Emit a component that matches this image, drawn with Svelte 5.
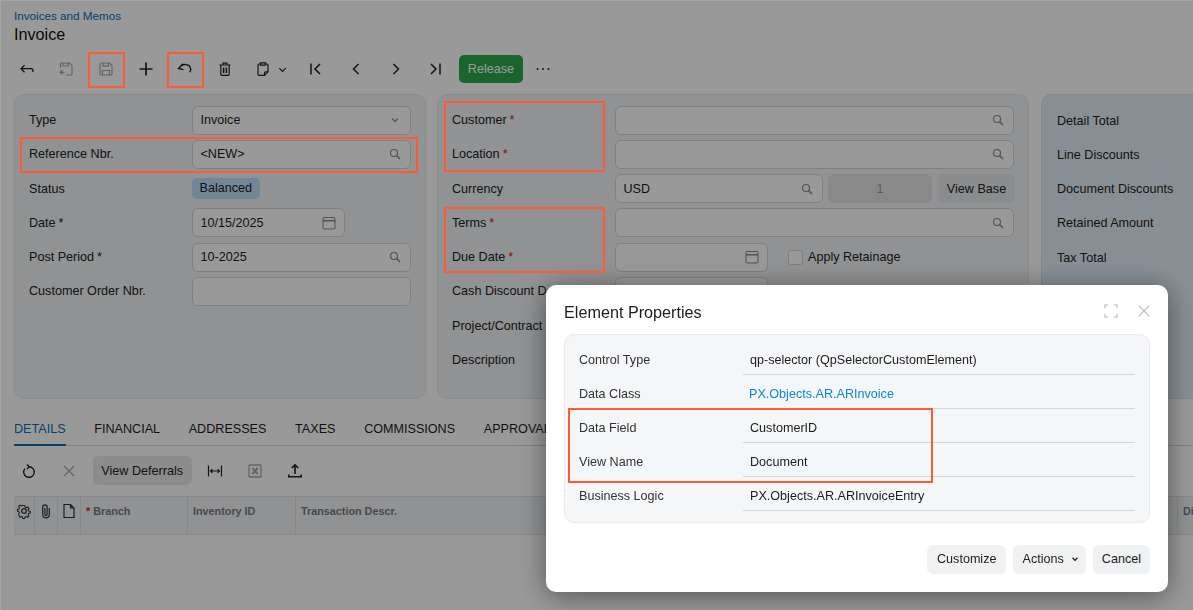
<script>
  const leftRows = [
    { label: 'Type', value: 'Invoice', icon: 'chevron' },
    { label: 'Reference Nbr.', value: '<NEW>', icon: 'search' },
    { label: 'Status', badge: 'Balanced' },
    { label: 'Date', star: 'plain', value: '10/15/2025', icon: 'calendar', narrow: true },
    { label: 'Post Period', star: 'plain', value: '10-2025', icon: 'search' },
    { label: 'Customer Order Nbr.', value: '' }
  ];

  const totals = ['Detail Total', 'Line Discounts', 'Document Discounts', 'Retained Amount', 'Tax Total'];
  const tabs = ['Details', 'Financial', 'Addresses', 'Taxes', 'Commissions', 'Approvals'];

  const props = [
    { label: 'Control Type', value: 'qp-selector (QpSelectorCustomElement)' },
    { label: 'Data Class', value: 'PX.Objects.AR.ARInvoice', link: true },
    { label: 'Data Field', value: 'CustomerID' },
    { label: 'View Name', value: 'Document' },
    { label: 'Business Logic', value: 'PX.Objects.AR.ARInvoiceEntry' }
  ];
</script>

{#snippet icon(name)}
  {#if name === 'search'}
    <svg class="field-icon" viewBox="0 0 12 12" fill="none" stroke="currentColor" stroke-width="1.2">
      <circle cx="5" cy="5" r="3.5"></circle>
      <path d="M7.6 7.6 11 11" stroke-width="1.5"></path>
    </svg>
  {:else if name === 'chevron'}
    <svg class="field-icon" viewBox="0 0 12 12" fill="none" stroke="currentColor" stroke-width="1.2">
      <path d="M3 4.5 6 7.5 9 4.5"></path>
    </svg>
  {:else if name === 'calendar'}
    <svg class="cal-icon" viewBox="0 0 14 14" fill="none" stroke="currentColor" stroke-width="1.1">
      <rect x="1" y="1.5" width="12" height="11.5" rx="1.5"></rect>
      <path d="M1 4.8h12" stroke-width="1.5"></path>
    </svg>
  {/if}
{/snippet}

{#snippet field(value, name, cls = '')}
  <div class="input {cls}">
    <span class="input-text">{value}</span>
    {@render icon(name)}
  </div>
{/snippet}

<div class="page">
  <header class="head">
    <a class="crumb" href="#top">Invoices and Memos</a>
    <h1>Invoice</h1>
  </header>

  <div class="toolbar">
    <button class="tool" aria-label="Back">
      <svg viewBox="0 0 18 18" fill="none" stroke="currentColor" stroke-width="1.3"><path d="M6.5 5.2 3 8.7l3.5 3.5M3 8.7h10.2a1.8 1.8 0 0 1 1.8 1.8v1.4"></path></svg>
    </button>
    <button class="tool off" aria-label="Save and close">
      <svg viewBox="0 0 18 18" fill="none" stroke="currentColor" stroke-width="1.2"><path d="M3.5 8V4a1 1 0 0 1 1-1h8l2.5 2.5V14a1 1 0 0 1-1 1H9M6 3v3h5V3"></path><path d="M5.5 10 3 12.3l2.5 2.3M3 12.3h4.5"></path></svg>
    </button>
    <button class="tool off" aria-label="Save">
      <svg viewBox="0 0 18 18" fill="none" stroke="currentColor" stroke-width="1.2"><path d="M3 4a1 1 0 0 1 1-1h8.5L15 5.5V14a1 1 0 0 1-1 1H4a1 1 0 0 1-1-1z"></path><path d="M6 3v3.2h5.5V3M5.5 15v-4.5h7V15"></path></svg>
    </button>
    <button class="tool" aria-label="Add">
      <svg viewBox="0 0 18 18" fill="none" stroke="currentColor" stroke-width="1.7"><path d="M9 2.5v13M2.5 9h13"></path></svg>
    </button>
    <button class="tool" aria-label="Undo">
      <svg viewBox="0 0 18 18" fill="none" stroke="currentColor" stroke-width="1.4"><path d="M6.8 3.8 2.6 8.5l4.8 1.1M3 8.3C4.8 5.4 7.6 4.2 10.2 4.6a4.7 4.7 0 0 1 3.5 7.6"></path></svg>
    </button>
    <button class="tool" aria-label="Delete">
      <svg viewBox="0 0 18 18" fill="none" stroke="currentColor" stroke-width="1.2"><path d="M3.5 5h11M7 5V3.2h4V5M4.8 5v9.3a1 1 0 0 0 1 1h6.4a1 1 0 0 0 1-1V5"></path><path d="M7.6 7.5v5.5M10.4 7.5v5.5" stroke-width="1.5"></path></svg>
    </button>
    <button class="tool paste" aria-label="Copy">
      <svg viewBox="0 0 18 18" fill="none" stroke="currentColor" stroke-width="1.2"><path d="M6.5 4H5a1 1 0 0 0-1 1v9.3a1 1 0 0 0 1 1h5.5l3.5-3.5V5a1 1 0 0 0-1-1h-1.5"></path><path d="M6.5 2.8h5V5.2h-5zM10.5 15.3v-2.5a1 1 0 0 1 1-1H14"></path></svg>
      <svg class="small" viewBox="0 0 12 12" fill="none" stroke="currentColor" stroke-width="1.4"><path d="M2.5 4.5 6 8l3.5-3.5"></path></svg>
    </button>
    <button class="tool" aria-label="First">
      <svg viewBox="0 0 18 18" fill="none" stroke="currentColor" stroke-width="1.5"><path d="M4 3.5v11M13 4 8 9l5 5"></path></svg>
    </button>
    <button class="tool" aria-label="Previous">
      <svg viewBox="0 0 18 18" fill="none" stroke="currentColor" stroke-width="1.5"><path d="M11.5 4 6.5 9l5 5"></path></svg>
    </button>
    <button class="tool" aria-label="Next">
      <svg viewBox="0 0 18 18" fill="none" stroke="currentColor" stroke-width="1.5"><path d="m6.5 4 5 5-5 5"></path></svg>
    </button>
    <button class="tool" aria-label="Last">
      <svg viewBox="0 0 18 18" fill="none" stroke="currentColor" stroke-width="1.5"><path d="m5 4 5 5-5 5M14 3.5v11"></path></svg>
    </button>
    <button class="release">Release</button>
    <button class="tool more" aria-label="More">
      <svg viewBox="0 0 18 18" fill="currentColor"><circle cx="3.5" cy="9" r="1"></circle><circle cx="9" cy="9" r="1"></circle><circle cx="14.5" cy="9" r="1"></circle></svg>
    </button>
  </div>

  <section class="panels">
    <div class="panel left">
      {#each leftRows as row}
        <div class="row">
          <span class="label">{row.label}{#if row.star}<i class="star plain">*</i>{/if}</span>
          {#if row.badge}
            <span class="badge">{row.badge}</span>
          {:else}
            {@render field(row.value, row.icon, row.narrow ? 'narrow' : '')}
          {/if}
        </div>
      {/each}
    </div>

    <div class="panel middle">
      <div class="row">
        <span class="label">Customer<i class="star">*</i></span>
        {@render field('', 'search')}
      </div>
      <div class="row">
        <span class="label">Location<i class="star">*</i></span>
        {@render field('', 'search')}
      </div>
      <div class="row">
        <span class="label">Currency</span>
        <div class="currency">
          {@render field('USD', 'search', 'usd')}
          <div class="rate">1</div>
          <button class="btn view-base">View Base</button>
        </div>
      </div>
      <div class="row">
        <span class="label">Terms<i class="star">*</i></span>
        {@render field('', 'search')}
      </div>
      <div class="row">
        <span class="label">Due Date<i class="star">*</i></span>
        <div class="due">
          {@render field('', 'calendar', 'narrow')}
          <label class="check"><span class="box"></span>Apply Retainage</label>
        </div>
      </div>
      <div class="row">
        <span class="label">Cash Discount Date</span>
        {@render field('', 'calendar', 'narrow')}
      </div>
      <div class="row"><span class="label">Project/Contract</span>{@render field('', 'search')}</div>
      <div class="row"><span class="label">Description</span>{@render field('', '')}</div>
    </div>

    <div class="panel totals">
      {#each totals as t}
        <div class="row"><span class="label">{t}</span></div>
      {/each}
    </div>
  </section>

  <nav class="tabs">
    {#each tabs as tab, i}
      <span class="tab" class:active={i === 0}>{tab}</span>
    {/each}
  </nav>

  <div class="grid-tools">
    <button class="tool" aria-label="Refresh">
      <svg viewBox="0 0 18 18" fill="none" stroke="currentColor" stroke-width="1.4"><path d="M8.8 4.7A5.3 5.3 0 1 1 4.9 6.6"></path><path d="M7 2.4 9.3 4.7 7 7"></path></svg>
    </button>
    <button class="tool off" aria-label="Remove">
      <svg viewBox="0 0 18 18" fill="none" stroke="currentColor" stroke-width="1.4"><path d="m4 4 10 10M14 4 4 14"></path></svg>
    </button>
    <button class="btn deferrals">View Deferrals</button>
    <button class="tool" aria-label="Fit columns">
      <svg viewBox="0 0 18 18" fill="none" stroke="currentColor" stroke-width="1.2"><path d="M2.5 3.5v11M15.5 3.5v11M4.5 9h9M6.3 7.2 4.5 9l1.8 1.8M11.7 7.2 13.5 9l-1.8 1.8"></path></svg>
    </button>
    <button class="tool off" aria-label="Export to Excel">
      <svg viewBox="0 0 18 18" fill="none" stroke="currentColor" stroke-width="1.3"><rect x="3" y="3" width="12" height="12" rx=".8"></rect><path d="m6.3 6 5.4 6M11.7 6l-5.4 6" stroke-width="2"></path></svg>
    </button>
    <button class="tool" aria-label="Upload">
      <svg viewBox="0 0 18 18" fill="none" stroke="currentColor" stroke-width="1.6"><path d="M9 12V3.2M5.8 6 9 2.8 12.2 6M2.8 12.5v2.3h12.4v-2.3"></path></svg>
    </button>
  </div>

  <div class="thead">
    <div class="th ico">
      <svg viewBox="0 0 16 16" fill="none" stroke="currentColor" stroke-width="1.3"><circle cx="8" cy="8" r="2.3"></circle><path d="M6.8 1.5h2.4l.4 2 1.5.7 1.8-1 1.6 1.8-1 1.6.5 1.6 2 .4v2.2l-2 .5-.6 1.5 1 1.7-1.7 1.6-1.7-1-1.5.6-.5 2H6.8l-.5-2-1.5-.6-1.7 1L1.4 12l1-1.7-.6-1.5-1.8-.5V6.1l2-.4.5-1.6-1-1.6 1.7-1.7 1.7 1 1.5-.7z" transform="translate(1.4 1.4) scale(.8)"></path></svg>
    </div>
    <div class="th ico">
      <svg viewBox="0 0 16 16" fill="none" stroke="currentColor" stroke-width="1.2"><path d="M11.3 5v6.5a3.3 3.3 0 0 1-6.6 0V4a2.2 2.2 0 0 1 4.4 0v7.5a1.1 1.1 0 0 1-2.2 0V5"></path></svg>
    </div>
    <div class="th ico">
      <svg viewBox="0 0 16 16" fill="none" stroke="currentColor" stroke-width="1.2"><path d="M3 1.5h6.5L13 5v9.5H3zM9.5 1.5V5H13"></path></svg>
    </div>
    <div class="th branch"><i class="star">*</i>Branch</div>
    <div class="th branch">Inventory ID</div>
    <div class="th descr">Transaction Descr.</div>
    <div class="th last">Di</div>
  </div>
</div>

<div class="overlay"></div>

<div class="modal">
  <div class="modal-head">
    <h2>Element Properties</h2>
    <div class="modal-actions">
      <svg class="expand" viewBox="0 0 14 14" fill="none" stroke="currentColor" stroke-width="1.1"><path d="M1 4V1h3M10 1h3v3M13 10v3h-3M4 13H1v-3"></path></svg>
      <svg class="close" viewBox="0 0 12 12" fill="none" stroke="currentColor" stroke-width="1.1"><path d="m.8.8 10.4 10.4M11.2.8.8 11.2"></path></svg>
    </div>
  </div>

  <div class="prop-card">
    {#each props as p}
      <div class="prop">
        <span class="prop-label">{p.label}</span>
        <span class="prop-value" class:link={p.link}>{p.value}</span>
      </div>
    {/each}
  </div>

  <div class="modal-foot">
    <button class="btn customize">Customize</button>
    <button class="btn actions">Actions
      <svg viewBox="0 0 12 12" fill="none" stroke="currentColor" stroke-width="1.5"><path d="M3 4.5 6 7.5 9 4.5"></path></svg>
    </button>
    <button class="btn">Cancel</button>
  </div>
</div>

<div class="mark save"></div>
<div class="mark undo"></div>
<div class="mark refnbr"></div>
<div class="mark customer"></div>
<div class="mark terms"></div>
<div class="mark datafield"></div>

<style>
  :global(body) {
    margin: 0;
    overflow: hidden;
    background: #fff;
  }

  .page {
    height: 610px;
    overflow: hidden;
    font-family: "Liberation Sans", Arial, sans-serif;
    font-size: 12.6px;
    color: #1d1d1d;
  }

  button {
    font: inherit;
    color: inherit;
    border: 0;
    background: none;
    padding: 0;
  }

  .head {
    padding: 9px 14px 0;
  }

  .crumb {
    display: block;
    font-size: 11.7px;
    line-height: 13px;
    color: #0a6fb5;
    text-decoration: none;
  }

  h1 {
    margin: 2px 0 0;
    font-size: 16.2px;
    line-height: 20px;
    font-weight: 400;
    color: #111;
  }

  .toolbar {
    display: flex;
    align-items: center;
    height: 36px;
    margin-top: 7px;
    padding-left: 7px;
  }

  .tool {
    display: flex;
    align-items: center;
    justify-content: center;
    width: 39.6px;
    height: 28px;
    color: #222;
    flex: none;
  }

  .tool svg {
    width: 18px;
    height: 18px;
  }

  .tool.off {
    color: #a9a9a9;
  }

  .tool.paste {
    width: 52px;
    gap: 5px;
    box-sizing: border-box;
  }

  .tool .small {
    width: 11px;
    height: 11px;
  }

  .release {
    height: 28px;
    width: 64px;
    margin-left: 4px;
    border-radius: 5px;
    background: #2ca84a;
    color: #fff;
  }

  .panels {
    display: grid;
    grid-template-columns: 412px 592px 1fr;
    gap: 11px;
    margin: 7px 0 0 14px;
    height: 305px;
  }

  .panel {
    box-sizing: border-box;
    padding: 7.9px 14px 0;
    border-radius: 10px;
    border: 1px solid #e6e9ee;
    background: #f1f3f6;
    overflow: hidden;
  }

  .panel.totals {
    margin-right: -20px;
    margin-left: 1px;
    background: #e2eef8;
    border-color: #d6e4ef;
    padding-left: 15px;
  }

  .row {
    display: flex;
    align-items: center;
    height: 34.25px;
  }

  .label {
    flex: none;
    width: 163px;
    white-space: nowrap;
    overflow: hidden;
    color: #222;
  }

  .totals .label {
    width: auto;
    margin-top: 1px;
  }

  .star {
    font-style: normal;
    color: #d4252a;
    margin-left: 3px;
  }

  .star.plain {
    color: #222;
  }

  .input {
    box-sizing: border-box;
    flex: 1;
    display: flex;
    align-items: center;
    justify-content: space-between;
    height: 29px;
    padding: 0 9px 0 7.5px;
    border: 1px solid #d3d6da;
    border-radius: 6px;
    background: #fff;
    min-width: 0;
  }

  .input.narrow {
    flex: none;
    width: 153px;
    padding-right: 8px;
  }

  .input-text {
    color: #1d1d1d;
  }

  .field-icon {
    width: 12px;
    height: 12px;
    color: #8c8c8c;
  }

  .cal-icon {
    width: 14px;
    height: 14px;
    color: #8c8c8c;
  }

  .badge {
    padding: 3px 7.5px 4px;
    border-radius: 5px;
    background: #bfe2fa;
    line-height: 14px;
  }

  .currency {
    flex: 1;
    display: flex;
    align-items: center;
  }

  .usd {
    flex: none;
    width: 208px;
  }

  .rate {
    flex: none;
    width: 104px;
    height: 29px;
    margin: 0 6px 0 5px;
    border-radius: 6px;
    background: #e4e5e7;
    color: #9a9a9a;
    display: flex;
    align-items: center;
    justify-content: center;
  }

  .btn {
    height: 29px;
    border-radius: 6px;
    background: #f0f1f2;
    color: #222;
    padding: 0 9px 1px;
    box-sizing: border-box;
    display: inline-flex;
    align-items: center;
    justify-content: center;
    flex: none;
  }

  .btn.customize {
    padding: 0 10px 1px;
  }

  .btn.actions {
    padding: 0 6px 1px 9px;
  }

  .view-base {
    width: 77px;
    padding: 0;
    background: #e8e9eb;
  }

  .due {
    flex: 1;
    display: flex;
    align-items: center;
  }

  .check {
    display: flex;
    align-items: center;
    gap: 5px;
    margin-left: 20px;
  }

  .box {
    box-sizing: border-box;
    width: 15px;
    height: 15px;
    border: 1px solid #cfd2d6;
    border-radius: 3px;
    background: #fff;
  }

  .tabs {
    display: flex;
    gap: 28.7px;
    margin: 16px 0 0 14px;
    height: 31px;
    box-sizing: border-box;
    border-bottom: 1px solid #d6d8db;
    white-space: nowrap;
  }

  .tab {
    text-transform: uppercase;
    line-height: 29px;
    height: 31px;
    box-sizing: border-box;
    color: #1d1d1d;
  }

  .tab.active {
    color: #0a6fb5;
    border-bottom: 2px solid #0a6fb5;
  }

  .grid-tools {
    display: flex;
    align-items: center;
    height: 29px;
    margin-top: 10px;
    padding-left: 9.5px;
  }

  .deferrals {
    width: 99px;
    padding: 0;
    margin-left: 4px;
    background: #e9eaec;
  }

  .grid-tools .deferrals + .tool {
    margin-left: 4px;
  }

  .thead {
    display: grid;
    grid-template-columns: 21px 23px 23px 107px 108px 882px 40px;
    height: 39px;
    margin: 11px 0 0 14px;
    box-sizing: border-box;
    border-top: 1px solid #dfe1e4;
    border-bottom: 1px solid #dfe1e4;
    background: #f1f3f6;
    color: #7b7b7b;
    font-size: 10.8px;
    font-weight: 700;
  }

  .th {
    box-sizing: border-box;
    padding: 7px 5px 0;
    border-right: 1px solid #dfe1e4;
    line-height: 14px;
    white-space: nowrap;
  }

  .th.ico {
    padding: 6px 0 0;
    display: flex;
    justify-content: center;
    color: #333;
  }

  .th.ico svg {
    width: 16px;
    height: 16px;
  }

  .th .star {
    font-weight: 700;
    margin: 0 3px 0 0;
  }

  .overlay {
    position: fixed;
    inset: 0;
    background: rgba(0, 0, 0, 0.4);
    box-shadow: inset 1px 1px 0 rgba(255, 255, 255, 0.12);
  }

  .modal {
    position: fixed;
    left: 546px;
    top: 285px;
    width: 622px;
    height: 307px;
    box-sizing: border-box;
    padding: 0 18px;
    display: flex;
    flex-direction: column;
    border-radius: 10px;
    background: #fff;
    box-shadow: 0 4px 28px rgba(0, 0, 0, 0.45);
    font-family: "Liberation Sans", Arial, sans-serif;
    font-size: 12.6px;
    color: #1d1d1d;
  }

  .modal-head {
    display: flex;
    align-items: center;
    justify-content: space-between;
    height: 49px;
  }

  h2 {
    margin: 6px 0 0;
    font-size: 16.2px;
    font-weight: 400;
    color: #1d1d1d;
  }

  .modal-actions {
    display: flex;
    align-items: center;
    gap: 20px;
    color: #b4b4b4;
    margin-top: 2px;
  }

  .expand {
    width: 14px;
    height: 14px;
  }

  .close {
    width: 12px;
    height: 12px;
  }

  .prop-card {
    box-sizing: border-box;
    height: 189px;
    padding: 6px 14px 0;
    border: 1px solid #e9ebee;
    border-radius: 10px;
    background: #f5f6f8;
  }

  .prop {
    display: flex;
    align-items: stretch;
    height: 34.1px;
  }

  .prop-label {
    flex: none;
    width: 164px;
    padding-top: 3.5px;
    line-height: 30px;
    color: #333;
  }

  .prop-value {
    flex: 1;
    padding: 3.5px 0 0 7px;
    line-height: 30px;
    border-bottom: 1px solid #d4d6d9;
    color: #1d1d1d;
  }

  .prop-value.link {
    padding-left: 6px;
    color: #0e84d8;
  }

  .modal-foot {
    display: flex;
    justify-content: flex-end;
    gap: 7px;
    margin-top: 22px;
  }

  .modal-foot svg {
    width: 10px;
    height: 10px;
    margin-left: 6px;
  }

  .mark {
    position: fixed;
    box-sizing: border-box;
    border: 2px solid #ff5a36;
    pointer-events: none;
  }

  .save { left: 88px; top: 52px; width: 37px; height: 36px; }
  .undo { left: 167px; top: 52px; width: 37px; height: 36px; }
  .refnbr { left: 20px; top: 137px; width: 398px; height: 36px; }
  .customer { left: 444px; top: 101px; width: 161px; height: 71px; }
  .terms { left: 444px; top: 207px; width: 161px; height: 66px; }
  .datafield { left: 568px; top: 408px; width: 365px; height: 75px; }
</style>
